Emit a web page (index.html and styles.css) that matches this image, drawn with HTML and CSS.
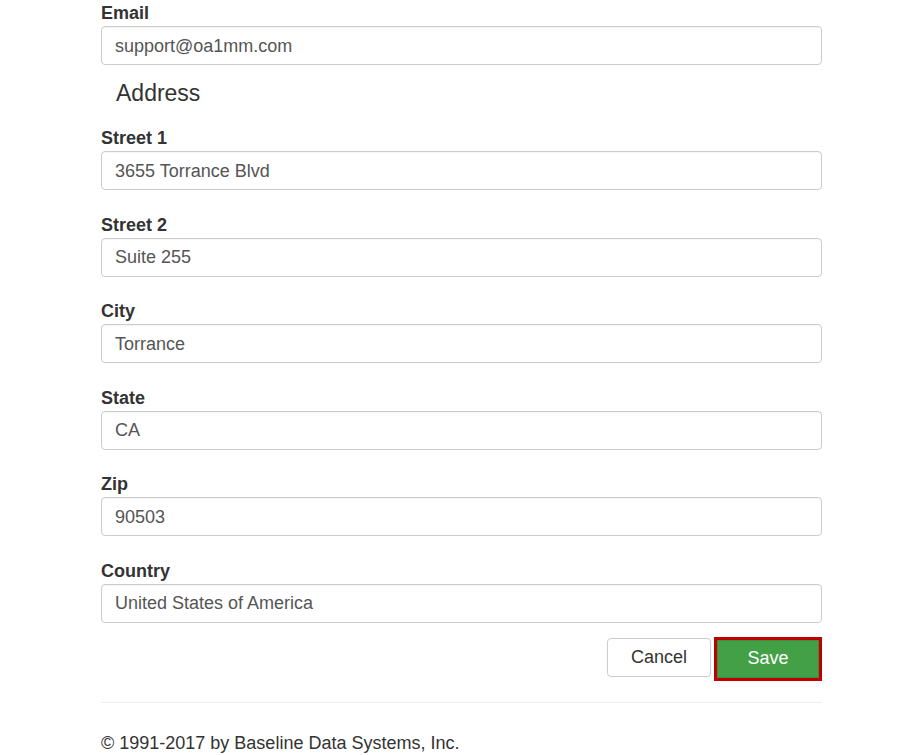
FILE: index.html
```html
<!DOCTYPE html>
<html>
<head>
<meta charset="utf-8">
<link rel="stylesheet" href="styles.css">
</head>
<body>
<div class="container">
  <form class="form">
    <div class="form-group email-group">
      <label class="label">Email</label>
      <div class="input">support@oa1mm.com</div>
    </div>
    <h4 class="section-title">Address</h4>
    <div class="form-group">
      <label class="label">Street 1</label>
      <div class="input">3655 Torrance Blvd</div>
    </div>
    <div class="form-group">
      <label class="label">Street 2</label>
      <div class="input">Suite 255</div>
    </div>
    <div class="form-group">
      <label class="label">City</label>
      <div class="input">Torrance</div>
    </div>
    <div class="form-group">
      <label class="label">State</label>
      <div class="input">CA</div>
    </div>
    <div class="form-group">
      <label class="label">Zip</label>
      <div class="input">90503</div>
    </div>
    <div class="form-group last">
      <label class="label">Country</label>
      <div class="input">United States of America</div>
    </div>
    <div class="actions">
      <button type="button" class="btn btn-cancel">Cancel</button>
      <button type="button" class="btn btn-save">Save</button>
    </div>
  </form>
  <hr class="divider">
  <footer class="footer">© 1991-2017 by Baseline Data Systems, Inc.</footer>
</div>
</body>
</html>
```

FILE: styles.css
```css
html, body {
  margin: 0;
  padding: 0;
  background: #ffffff;
}

body {
  font-family: "Liberation Sans", Arial, sans-serif;
  font-size: 18px;
  color: #333333;
}

.container {
  margin-left: 101px;
  width: 721px;
  padding-top: 3px;
}

.form {
  display: flex;
  flex-direction: column;
}

.form-group {
  display: flex;
  flex-direction: column;
  margin-bottom: 24.6px;
}

.form-group.email-group {
  margin-bottom: 14px;
}

.form-group.last {
  margin-bottom: 14px;
}

.label {
  font-weight: bold;
  font-size: 18px;
  line-height: 20px;
  margin-bottom: 3px;
  color: #333333;
}

.input {
  box-sizing: border-box;
  height: 39px;
  border: 1px solid #cccccc;
  border-radius: 4px;
  padding: 1px 13px 0 13px;
  display: flex;
  align-items: center;
  font-size: 18px;
  color: #555555;
  box-shadow: inset 0 1px 1px rgba(0, 0, 0, 0.04);
}

.section-title {
  margin: 0 0 21px 0;
  padding-left: 15px;
  font-size: 23px;
  font-weight: normal;
  line-height: 28px;
  color: #333333;
}

.actions {
  display: flex;
  justify-content: flex-end;
  align-items: flex-start;
  gap: 3px;
}

.btn {
  box-sizing: border-box;
  font-family: "Liberation Sans", Arial, sans-serif;
  font-size: 18px;
  cursor: pointer;
  padding: 0;
}

.btn-cancel {
  margin-top: 1px;
  width: 104px;
  height: 39px;
  padding-top: 1px;
  background: #ffffff;
  color: #333333;
  border: 1px solid #cccccc;
  border-radius: 4px;
}

.btn-save {
  width: 108px;
  height: 44px;
  background: #43a047;
  color: #ffffff;
  border: 3px solid #c00000;
  border-radius: 0;
  box-shadow: inset 0 0 0 1px #3b8f3e;
}

.divider {
  margin: 21px 0 0 0;
  border: 0;
  border-top: 1px solid #eeeeee;
  height: 0;
}

.footer {
  margin-top: 30px;
  font-size: 18px;
  line-height: 20px;
  color: #333333;
}
```
